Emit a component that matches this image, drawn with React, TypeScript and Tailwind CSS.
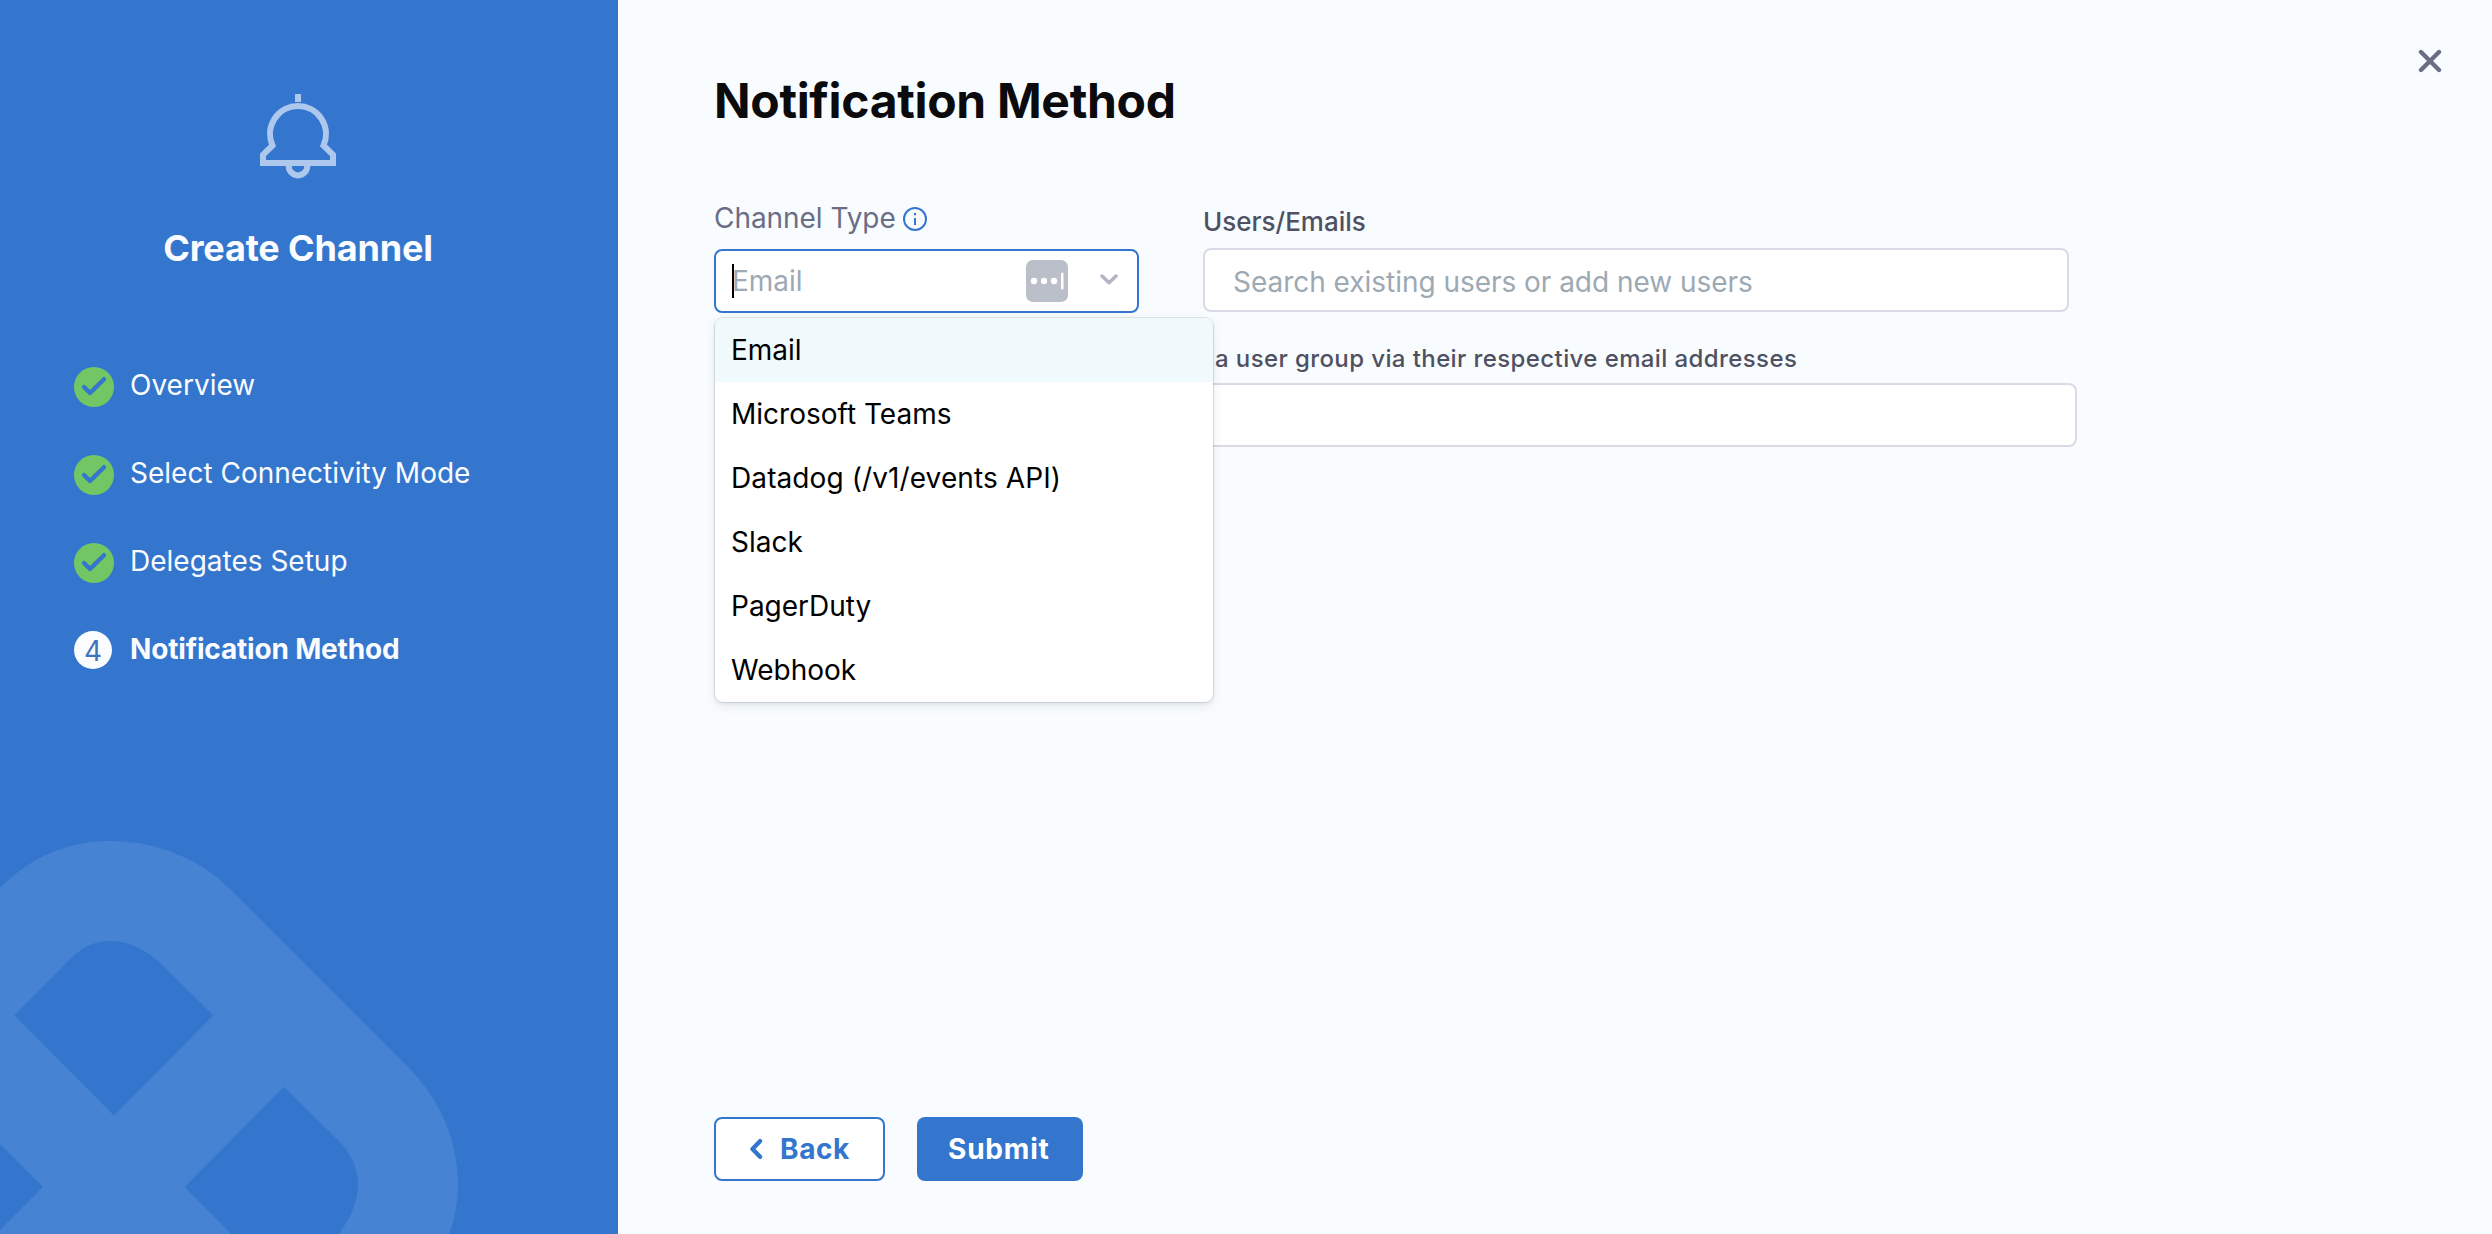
const completedSteps = ["Overview", "Select Connectivity Mode", "Delegates Setup"];
const channelTypes = ["Email", "Microsoft Teams", "Datadog (/v1/events API)", "Slack", "PagerDuty", "Webhook"];

function BellIcon() {
  return (
    <svg width="80" height="88" viewBox="0 0 80 88" fill="none" stroke="#aec7ec" strokeWidth="6" strokeLinejoin="miter">
      <path d="M40 2v8" />
      <path d="M14.5 53.5A28 28 0 1 1 65.5 53.5L75 62.8V71H5V62.8Z" />
      <path d="M30.8 73v1.200a9.2 9.2 0 0 0 18.4 0V73" />
    </svg>
  );
}

function StepDoneIcon() {
  return (
    <svg width="40" height="40" viewBox="0 0 40 40" fill="none">
      <circle cx="20" cy="20" r="20" fill="#73c664" />
      <path d="M10 20l6 6L30 12.2" stroke="#3476cd" strokeWidth="4.4" strokeLinecap="round" strokeLinejoin="round" />
    </svg>
  );
}

function LogoWatermark() {
  return (
    <svg className="absolute bottom-0 left-0" width="460" height="394" viewBox="0 840 460 394">
      <path
        fill="#4783d3"
        fillRule="evenodd"
        d="M0 888C33 855 70 841 110 841C155 841 198 858 228 887L408 1067C440 1099 458 1141 458 1184C458 1201 455 1219 449 1234H339C348 1221 358 1204 358 1184C358 1168 351 1153 338 1140L284 1086.7L184.500 1187L231 1234H0V1230L43 1187L0 1143.700Z
        M14.500 1015.300L66 963C79 949 92 941 110 941C130 941 149 951 164.500 967L213.300 1015.300L114 1115.700Z"
      />
    </svg>
  );
}

function Sidebar() {
  return (
    <aside className="relative w-[618px] shrink-0 overflow-hidden bg-[#3476cd] text-[#fafcff]">
      <LogoWatermark />
      <div className="relative flex h-[343px] w-[596px] flex-col items-center pt-[92px]">
        <BellIcon />
        <h1 className="mt-[46px] text-[36px] font-bold leading-[44px] tracking-[-0.16px]">Create Channel</h1>
      </div>
      <ol className="relative flex flex-col pl-[74px] text-[28px] leading-[34px]">
        {completedSteps.map((step) => (
          <li key={step} className="flex h-[88px] items-center gap-4">
            <StepDoneIcon />
            <span className="pb-1">{step}</span>
          </li>
        ))}
        <li className="flex h-[88px] items-center gap-[18px]">
          <span className="mb-0.5 flex size-[38px] items-center justify-center rounded-full bg-[#fafcff] text-[#3f74bb]">
            <span className="pt-0.5">4</span>
          </span>
          <span className="pb-1 font-bold tracking-[-0.17px]">Notification Method</span>
        </li>
      </ol>
    </aside>
  );
}

function ChannelTypeField() {
  return (
    <div className="w-[425px]">
      <label className="flex h-[28px] items-center gap-[7px] text-[28px] leading-[28px] tracking-[-0.05px] text-[#6b6d85]">
        Channel Type
        <svg className="mt-0.5" width="24" height="24" viewBox="0 0 24 24" fill="none" stroke="#3476cd" strokeWidth="2">
          <circle cx="12" cy="12" r="11" />
          <path d="M12 11v7M12 6v2.200" />
        </svg>
      </label>
      <div className="relative mt-[17px] flex h-16 items-center rounded-lg border-2 border-[#3476cd] bg-white pl-4">
        <span className="h-[34px] w-[2px] bg-black" />
        <span className="-ml-[2px] flex-1 text-[28px] text-[#9da9b3]">Email</span>
        <svg width="42" height="42" viewBox="0 0 42 42">
          <rect width="42" height="42" rx="7" fill="#bbbfc9" />
          <g fill="#fff">
            <circle cx="8" cy="21" r="3.200" />
            <circle cx="18" cy="21" r="3.200" />
            <circle cx="28" cy="21" r="3.200" />
            <rect x="35" y="12.500" width="2.500" height="17" rx="1.200" />
          </g>
        </svg>
        <svg className="mb-[4px] ml-8 mr-[19px]" width="18" height="11" viewBox="0 0 18 11" fill="none" stroke="#b4b5c4" strokeWidth="3.500" strokeLinecap="round" strokeLinejoin="round">
          <path d="M2 2L9 8.700l7-6.700" />
        </svg>
        <ul className="absolute left-[-1px] top-[67px] z-10 w-[498px] overflow-hidden rounded-lg bg-white text-[28px] text-black shadow-[0_0_0_1px_rgba(16,22,26,0.1),0_2px_4px_rgba(16,22,26,0.06),0_4px_12px_rgba(16,22,26,0.08)]">
          {channelTypes.map((type, i) => (
            <li key={type} className={i === 0 ? "flex h-16 items-center bg-[#f0f9fc] pl-4" : "flex h-16 items-center pl-4"}>
              <span className={type.startsWith("Datadog") ? "tracking-[0.1px]" : undefined}>{type}</span>
            </li>
          ))}
        </ul>
      </div>
    </div>
  );
}

function RecipientsFields() {
  return (
    <div className="mt-1 w-[874px]">
      <label className="block text-[26px] font-medium leading-[28px] text-[#4f5162]">Users/Emails</label>
      <div className="mt-3 flex h-16 w-[866px] items-center rounded-lg border-2 border-[#d9dae5] bg-white pl-7 pt-[3px] text-[28px] tracking-[-0.03px] text-[#9da9b3]">
        Search existing users or add new users
      </div>
      <label className="mt-[33px] block pl-3 text-[24px] font-medium leading-[28px] tracking-[0.4px] text-[#4f5162]">
        a user group via their respective email addresses
      </label>
      <div className="mt-[10px] h-16 rounded-lg border-2 border-[#d9dae5] bg-white" />
    </div>
  );
}

export default function App() {
  return (
    <div className="flex h-[1234px] w-[2492px] overflow-hidden bg-[#f8fcff] font-['Inter',sans-serif]">
      <Sidebar />
      <main className="flex flex-1 flex-col pb-[53px] pl-24">
        <header className="flex h-[130px] items-start justify-between pr-[50px]">
          <h2 className="mt-[72px] text-[48px] font-bold leading-[58px] tracking-[-0.31px] text-[#0b0b0d]">Notification Method</h2>
          <button className="mt-[49px]" aria-label="Close">
            <svg width="24" height="24" viewBox="0 0 24 24" stroke="#6b6d85" strokeWidth="4.400" strokeLinecap="round">
              <path d="M3 3l18 18M21 3L3 21" />
            </svg>
          </button>
        </header>
        <section className="mt-[74px] flex flex-1 items-start gap-16">
          <ChannelTypeField />
          <RecipientsFields />
        </section>
        <footer className="flex gap-8 text-[28px] font-bold">
          <button className="flex h-16 w-[171px] items-center rounded-lg border-2 border-[#3476cd] bg-white pl-[33px] tracking-[0.6px] text-[#3476cd]">
            <svg width="14" height="22" viewBox="0 0 14 22" fill="none" stroke="#3476cd" strokeWidth="4.400" strokeLinecap="round" strokeLinejoin="round">
              <path d="M11 3.200L3.500 11l7.500 7.800" />
            </svg>
            <span className="ml-[17px]">Back</span>
          </button>
          <button className="flex h-16 w-[166px] items-center rounded-lg bg-[#3476cd] pl-[31px] tracking-[0.8px] text-white">Submit</button>
        </footer>
      </main>
    </div>
  );
}
